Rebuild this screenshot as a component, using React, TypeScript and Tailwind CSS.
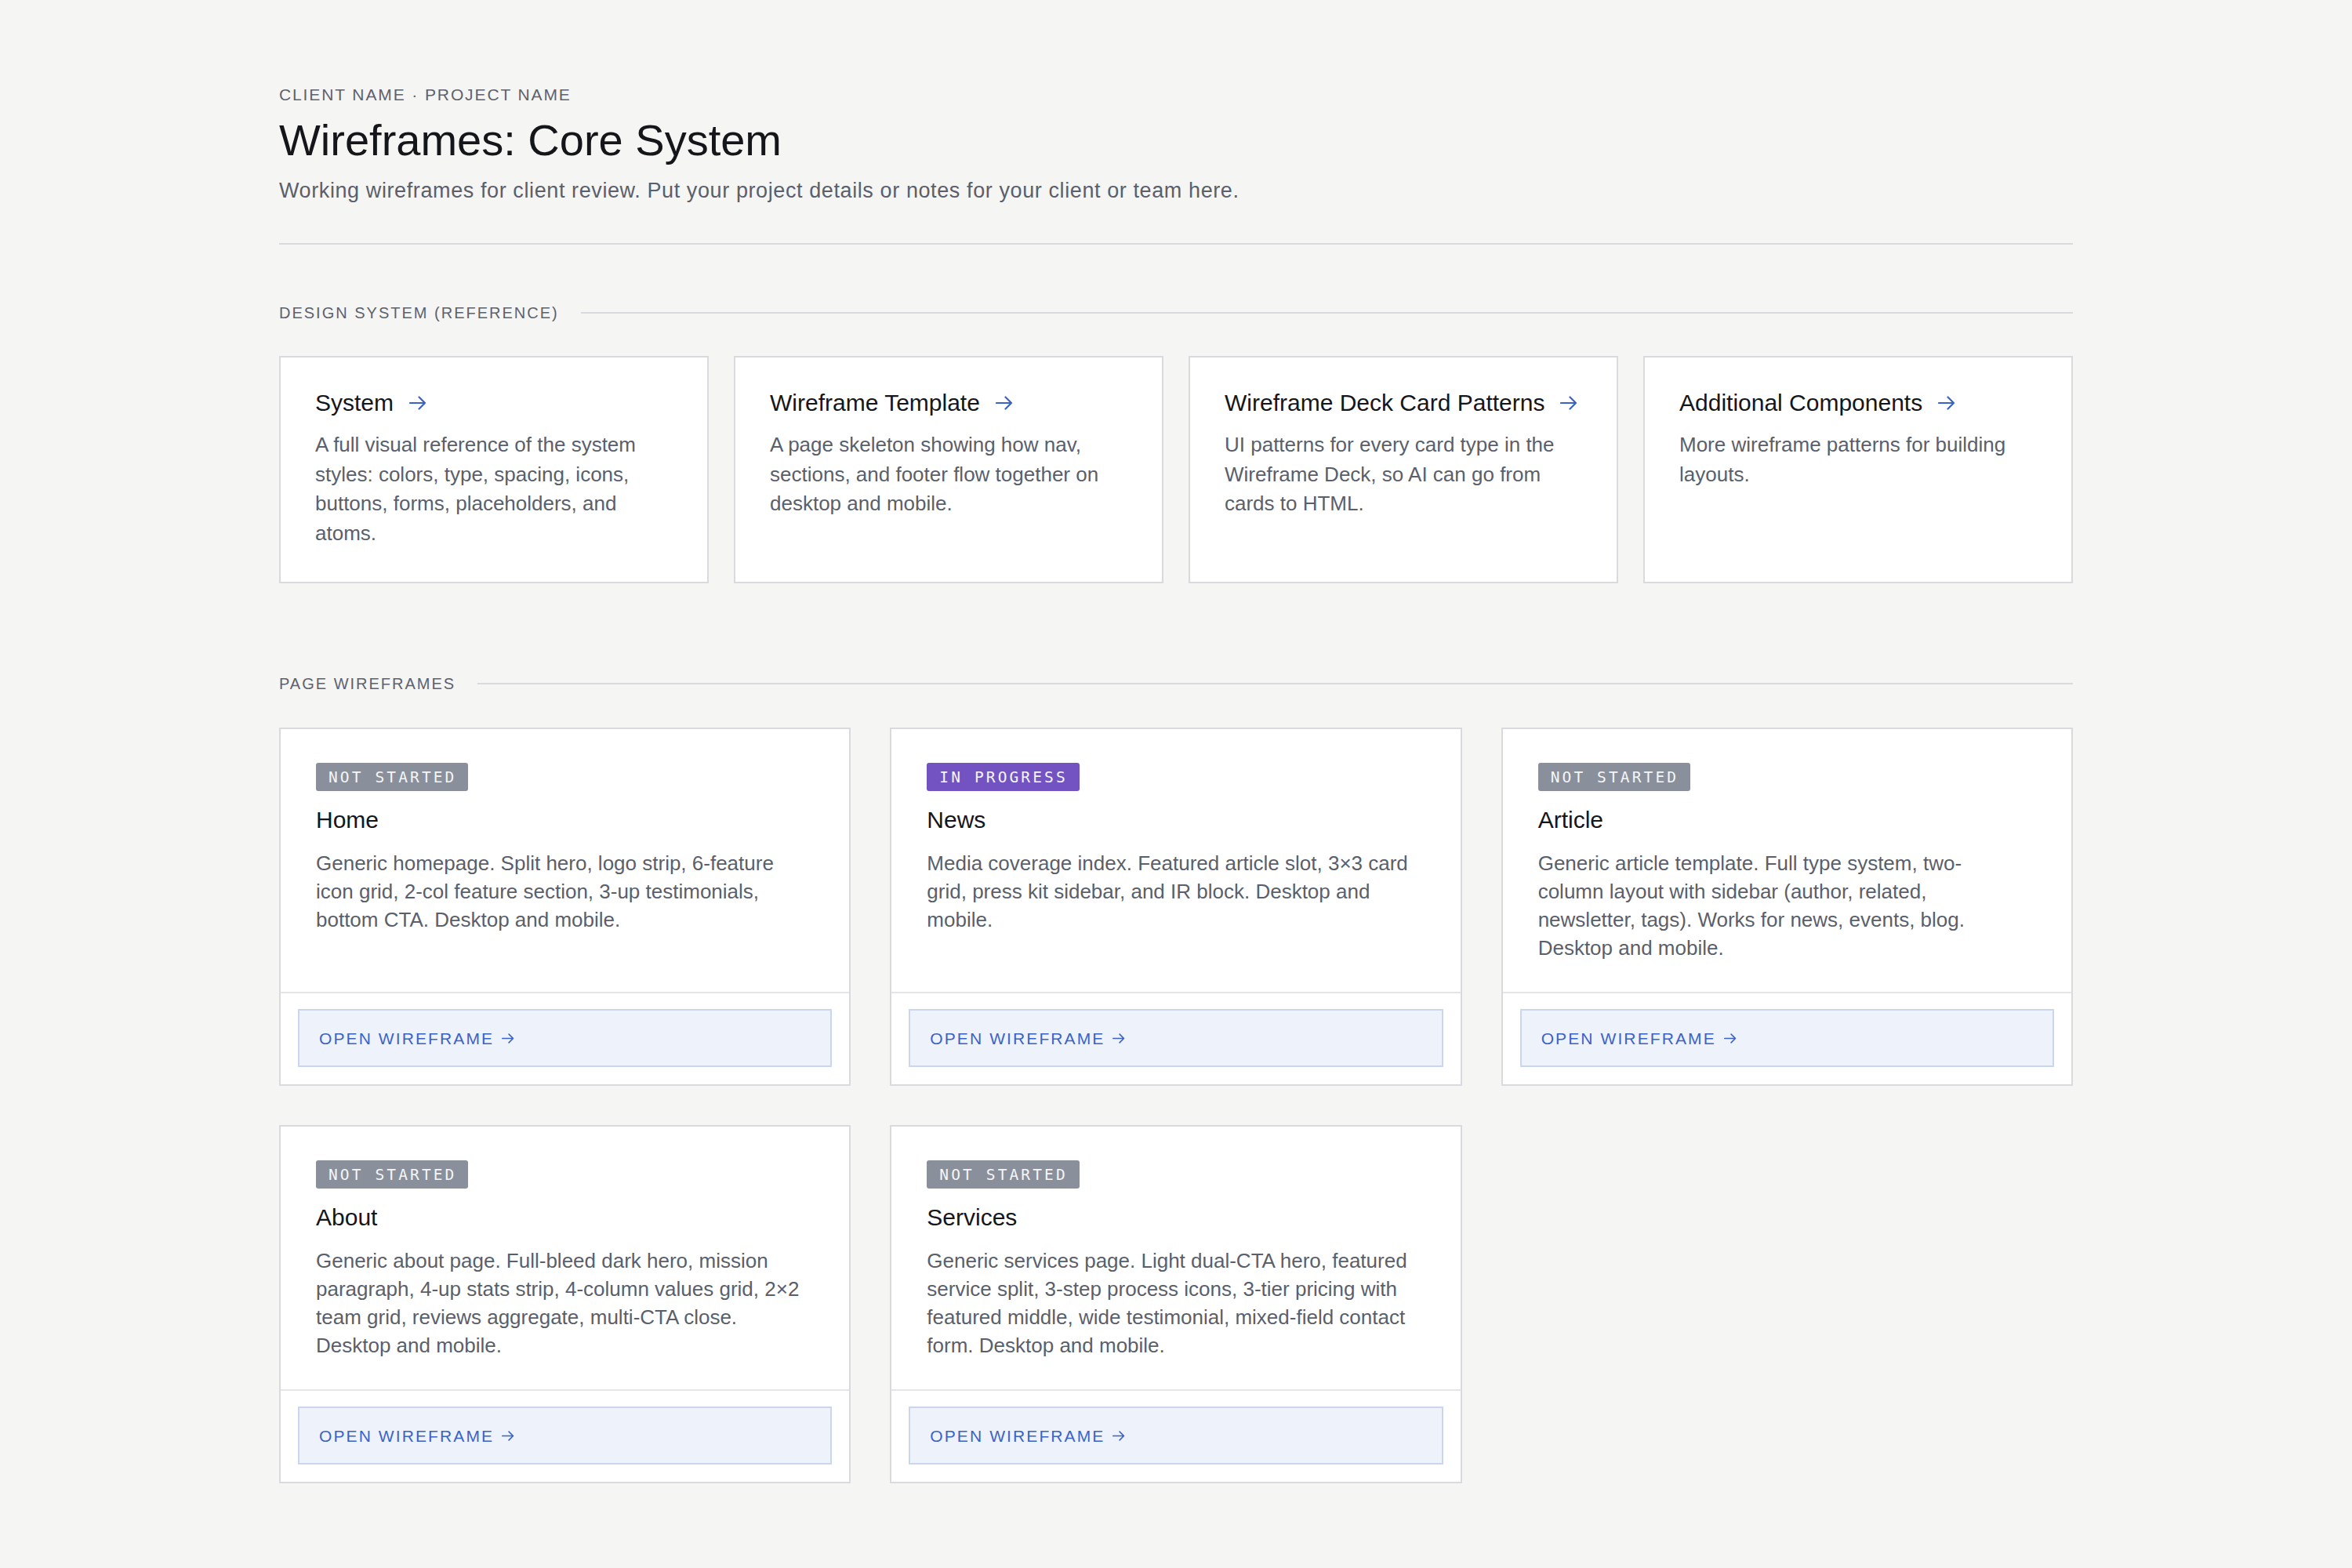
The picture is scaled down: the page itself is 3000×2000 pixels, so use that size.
import { ReactNode } from "react";

// ---------------------------------------------------------------------------
// Data
// ---------------------------------------------------------------------------

type Status = "not-started" | "in-progress";

interface ReferenceLink {
  title: string;
  body: string;
}

interface PageWireframe {
  title: string;
  status: Status;
  body: string;
}

const REFERENCE_LINKS: ReferenceLink[] = [
  {
    title: "System",
    body: "A full visual reference of the system styles: colors, type, spacing, icons, buttons, forms, placeholders, and atoms.",
  },
  {
    title: "Wireframe Template",
    body: "A page skeleton showing how nav, sections, and footer flow together on desktop and mobile.",
  },
  {
    title: "Wireframe Deck Card Patterns",
    body: "UI patterns for every card type in the Wireframe Deck, so AI can go from cards to HTML.",
  },
  {
    title: "Additional Components",
    body: "More wireframe patterns for building layouts.",
  },
];

const PAGES: PageWireframe[] = [
  {
    title: "Home",
    status: "not-started",
    body: "Generic homepage. Split hero, logo strip, 6-feature icon grid, 2-col feature section, 3-up testimonials, bottom CTA. Desktop and mobile.",
  },
  {
    title: "News",
    status: "in-progress",
    body: "Media coverage index. Featured article slot, 3×3 card grid, press kit sidebar, and IR block. Desktop and mobile.",
  },
  {
    title: "Article",
    status: "not-started",
    body: "Generic article template. Full type system, two-column layout with sidebar (author, related, newsletter, tags). Works for news, events, blog. Desktop and mobile.",
  },
  {
    title: "About",
    status: "not-started",
    body: "Generic about page. Full-bleed dark hero, mission paragraph, 4-up stats strip, 4-column values grid, 2×2 team grid, reviews aggregate, multi-CTA close. Desktop and mobile.",
  },
  {
    title: "Services",
    status: "not-started",
    body: "Generic services page. Light dual-CTA hero, featured service split, 3-step process icons, 3-tier pricing with featured middle, wide testimonial, mixed-field contact form. Desktop and mobile.",
  },
];

// ---------------------------------------------------------------------------
// Bits
// ---------------------------------------------------------------------------

function Arrow({ className = "" }: { className?: string }) {
  return (
    <svg viewBox="0 0 22 18" fill="none" className={className}>
      <path
        d="M1 9h19M12.5 1.5 20 9l-7.5 7.5"
        stroke="currentColor"
        strokeWidth="2.2"
        strokeLinecap="round"
        strokeLinejoin="round"
      />
    </svg>
  );
}

function SectionLabel({ children }: { children: ReactNode }) {
  return (
    <div className="flex items-center gap-[28px]">
      <h2 className="shrink-0 text-[20px] leading-[28px] tracking-[0.1em] text-[#5d626d] uppercase">
        {children}
      </h2>
      <div className="h-[2px] flex-1 bg-[#d9d9de]" />
    </div>
  );
}

function StatusBadge({ status }: { status: Status }) {
  const label = status === "in-progress" ? "In progress" : "Not started";
  const tone = status === "in-progress" ? "bg-[#7353c1]" : "bg-[#8a909b]";
  return (
    <span
      className={`inline-flex h-[36px] items-center rounded-[3px] pl-[16px] pr-[15px] font-['DejaVu_Sans_Mono',monospace] text-[19.5px] tracking-[0.16em] text-[#f4f5f7] uppercase ${tone}`}
    >
      {label}
    </span>
  );
}

function ReferenceCard({ title, body }: ReferenceLink) {
  return (
    <a
      href="#"
      className="block border-2 border-[#d9d9de] bg-white px-[44px] pt-[38px] pb-[43px]"
    >
      <div className="flex items-center gap-[20px]">
        <span className="text-[30px] leading-[40px] text-[#15161a]">{title}</span>
        <Arrow className="h-[18px] w-[22px] text-[#3b63c6]" />
      </div>
      <p className="mt-[15px] text-[26px] leading-[37.6px] text-[#5a5f6b]">{body}</p>
    </a>
  );
}

function PageCard({ title, status, body }: PageWireframe) {
  return (
    <div className="flex flex-col border-2 border-[#d9d9de] bg-white">
      <div className="flex-1 pt-[43px] pr-[58px] pb-[38px] pl-[45px]">
        <StatusBadge status={status} />
        <h3 className="mt-[18px] text-[30px] leading-[38px] text-[#15161a]">{title}</h3>
        <p className="mt-[18px] text-[26px] leading-[36px] text-[#5a5f6b]">{body}</p>
      </div>
      <div className="border-t-2 border-[#e4e5ea] px-[22px] pt-[20px] pb-[22px]">
        <a
          href="#"
          className="flex h-[74px] items-center gap-[10px] border-2 border-[#c9d6ee] bg-[#eef2fa] pl-[25px] text-[21px] font-medium tracking-[0.1em] text-[#3b63c6] uppercase"
        >
          Open wireframe
          <Arrow className="h-[13px] w-[16px]" />
        </a>
      </div>
    </div>
  );
}

// ---------------------------------------------------------------------------
// Page
// ---------------------------------------------------------------------------

export default function App() {
  return (
    <div className="min-h-screen bg-[#f5f5f3] font-['Liberation_Sans',Arial,sans-serif]">
      <div className="mx-auto w-[2288px] pt-[107px] pb-[105px]">
        {/* Header */}
        <header className="border-b-2 border-[#d9d9de] pb-[49px]">
          <p className="text-[21px] leading-[28px] tracking-[0.09em] text-[#5d626d] uppercase">
            Client name · Project name
          </p>
          <h1 className="mt-[10px] text-[56px] leading-[68px] text-[#15161a]">
            Wireframes: Core System
          </h1>
          <p className="mt-[12px] text-[27px] leading-[36px] tracking-[0.6px] text-[#5a5f6b]">
            Working wireframes for client review. Put your project details or notes for your
            client or team here.
          </p>
        </header>

        {/* Design system links */}
        <section className="mt-[73px]">
          <SectionLabel>Design System (Reference)</SectionLabel>
          <div className="mt-[41px] grid grid-cols-4 gap-[32px]">
            {REFERENCE_LINKS.map((link) => (
              <ReferenceCard key={link.title} {...link} />
            ))}
          </div>
        </section>

        {/* Page wireframes */}
        <section className="mt-[114px]">
          <SectionLabel>Page Wireframes</SectionLabel>
          <div className="mt-[42px] grid grid-cols-3 gap-[50px]">
            {PAGES.map((page) => (
              <PageCard key={page.title} {...page} />
            ))}
          </div>
        </section>
      </div>
    </div>
  );
}
